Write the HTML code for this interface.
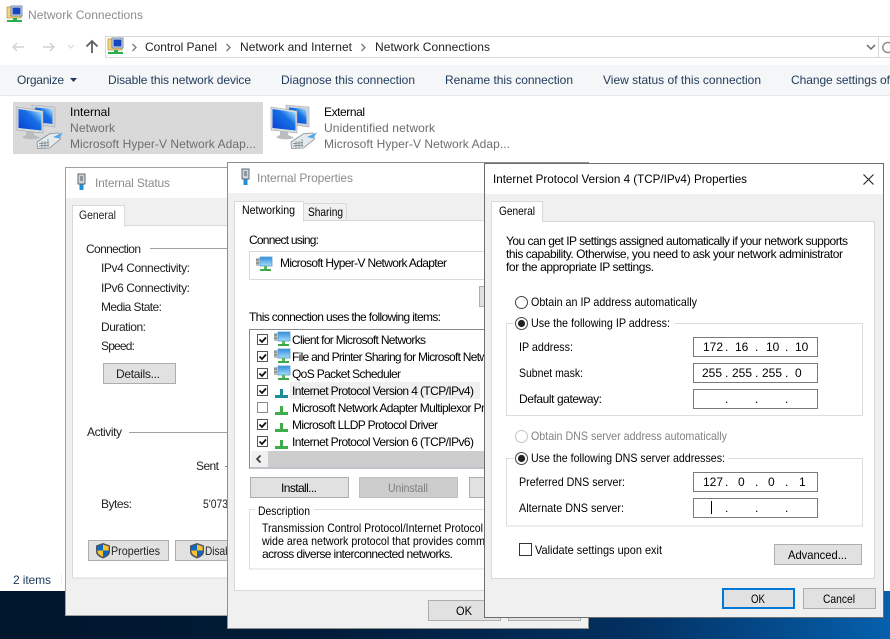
<!DOCTYPE html>
<html><head><meta charset="utf-8"><title>Network Connections</title>
<style>
html,body{margin:0;padding:0;background:#fff;overflow:hidden}
svg{display:block}
text{font:12px "Liberation Sans",sans-serif;fill:#000;white-space:pre}
.g{fill:#777}.l{fill:#8c8c8c}.b{fill:#1e395b}.d{fill:#6d6d6d}.n{fill:#222}
.btn{fill:#e1e1e1;stroke:#adadad}
.grp{fill:none;stroke:#dcdcdc}
.fld{fill:#fff;stroke:#7a7a7a}
.chk{fill:#fff;stroke:#555}
</style></head><body>
<svg xmlns="http://www.w3.org/2000/svg" width="890" height="639" viewBox="0 0 890 639">
<defs>
<linearGradient id="desk" x1="0" x2="1" y1="0" y2="0"><stop offset="0" stop-color="#00162c"/><stop offset=".35" stop-color="#001b38"/><stop offset=".7" stop-color="#022f5f"/><stop offset="1" stop-color="#0560ad"/></linearGradient>
<linearGradient id="scr" x1="0" x2="1" y1="1" y2="0"><stop offset="0" stop-color="#0a3ed2"/><stop offset=".6" stop-color="#1770e6"/><stop offset=".85" stop-color="#7cc0f4"/><stop offset="1" stop-color="#e6f6fe"/></linearGradient>
<linearGradient id="sm" x1="0" x2="0" y1="0" y2="1"><stop offset="0" stop-color="#2f8ee0"/><stop offset="1" stop-color="#a5dcf8"/></linearGradient>
<g id="big">
<path d="M32 105l23 2v20l-23-3z" fill="#cfd3d6" stroke="#a5aaae" stroke-width=".6"/>
<path d="M35 107.500l17.500 1.500v15l-17.500-2z" fill="url(#scr)"/>
<path d="M17 107l26 4v22l-26-3z" fill="#dcdfe1" stroke="#9a9fa4" stroke-width=".6"/>
<path d="M18.500 109l23 3.500v18l-23-2.500z" fill="url(#scr)"/>
<path d="M26 131l8 1v3l6 2.500c-3 2.500-15 2.500-18-.5l4-2z" fill="#b9bdc0"/>
<path d="M37 142l13-8.500 9-.5 1.500 6-11 9-12 .5z" fill="#e4e9ec" stroke="#858e94" stroke-width=".8"/>
<path d="M39 143.500l10-.8M39 146l10-.8M42 141v7M45 141v7M48 139v8" stroke="#6b7980" stroke-width=".7" fill="none"/>
<path d="M53 137l10-4.500-4 6z" fill="#4fa8e8"/>
</g>
<g id="mon">
<rect x="3" y="0" width="12" height="9" fill="url(#sm)" stroke="#5a9bc9" stroke-width=".8"/>
<rect x="7" y="9" width="3" height="3" fill="#5cb85c"/>
<rect x="3" y="12" width="11" height="2" fill="#3fa94a"/>
<rect x="-1" y="1" width="4" height="8" fill="#b8bdc2"/>
<path d="M-1 3h3M-1 6h3" stroke="#555" stroke-width=".8"/>
</g>
<g id="pr"><path d="M5 0h3v6h-3z"/><rect x="0" y="6" width="13" height="3"/></g>
<g id="plug"><rect x="1" y="0" width="7" height="10" fill="#cfd5d9" stroke="#5c6a73"/><rect x="3" y="2" width="3" height="5" fill="#8b98a1"/><rect x="2.500" y="10.500" width="4" height="5.500" fill="#1f8fd8"/></g>
<g id="shield"><path d="M7 0l7 2.500v6c0 3.500-3 5.500-7 7-4-1.500-7-3.500-7-7v-6z" fill="#4a5560"/><path d="M7 1.500v6h-5.700v-4z" fill="#0a67c4"/><path d="M7 1.500l5.700 2v4h-5.700z" fill="#f9c32c"/><path d="M1.300 7.500h5.700v6.300c-3-1.200-5.700-3-5.700-6.300z" fill="#f9c32c"/><path d="M7 7.500h5.700c0 3.300-2.700 5.100-5.700 6.300z" fill="#0a67c4"/></g>
<g id="fold"><rect x="0" y="1" width="14" height="11" fill="#f2d57a" stroke="#b99a45" stroke-width=".8"/><rect x="4" y="0" width="11" height="10" fill="#dfe6ee" stroke="#5d6b8a" stroke-width=".8"/><rect x="5.500" y="1.500" width="8" height="7" fill="#1546c0"/><rect x="6" y="12" width="4" height="3" fill="#26b14c"/><rect x="0" y="14" width="15" height="2" fill="#26b14c"/></g>
<path id="chev" d="M0 0l3.500 3.500-3.500 3.500" fill="none" stroke="#777" stroke-width="1.300"/>
</defs>

<!-- Desktop -->
<rect x="0" y="591" width="890" height="48" fill="url(#desk)"/>

<!-- Explorer -->
<rect width="890" height="591" fill="#fff"/>
<use href="#fold" x="7" y="6"/>
<text class="l" x="28" y="19" textLength="115">Network Connections</text>
<path d="M24 47h-11M17 43l-4 4 4 4" fill="none" stroke="#d2d2d2" stroke-width="1.500"/>
<path d="M43 47h11M50 43l4 4-4 4" fill="none" stroke="#d2d2d2" stroke-width="1.500"/>
<path d="M68 45l3 3 3-3" fill="none" stroke="#d9d9d9" stroke-width="1.200"/>
<path d="M92 53v-12M86.500 46.500l5.500-5.500 5.500 5.500" fill="none" stroke="#5f5f5f" stroke-width="1.800"/>
<rect x="105.500" y="36.500" width="800" height="21" fill="#fff" stroke="#d9d9d9"/>
<use href="#fold" x="108" y="38"/>
<use href="#chev" x="132.500" y="44"/>
<text class="n" x="145" y="51" textLength="72">Control Panel</text>
<use href="#chev" x="226.500" y="44"/>
<text class="n" x="240" y="51" textLength="112">Network and Internet</text>
<use href="#chev" x="361.500" y="44"/>
<text class="n" x="375" y="51" textLength="115">Network Connections</text>
<path d="M867 45l4 4 4-4" fill="none" stroke="#666" stroke-width="1.500"/>
<rect x="878" y="37" width="1" height="20" fill="#d9d9d9"/>
<path d="M890 43a5 5 0 1 0 0 9" fill="none" stroke="#8a8a8a" stroke-width="1.500"/>
<rect x="0" y="65" width="890" height="30" fill="#f5f6f7"/>
<rect x="0" y="95" width="890" height="1" fill="#e8e9ea"/>
<text class="b" x="17" y="84" textLength="47">Organize</text>
<path d="M70 78h7l-3.500 4z" fill="#1e395b"/>
<text class="b" x="108" y="84" textLength="143">Disable this network device</text>
<text class="b" x="281" y="84" textLength="134">Diagnose this connection</text>
<text class="b" x="445" y="84" textLength="128">Rename this connection</text>
<text class="b" x="603" y="84" textLength="158">View status of this connection</text>
<text class="b" x="791" y="84" textLength="99">Change settings of</text>
<rect x="13" y="102" width="250" height="52" fill="#d9d9d9"/>
<use href="#big"/>
<text x="70" y="116" textLength="40">Internal</text>
<text class="d" x="70" y="132" textLength="45">Network</text>
<text class="d" x="70" y="148" textLength="186">Microsoft Hyper-V Network Adap...</text>
<use href="#big" x="254"/>
<text x="324" y="116" textLength="41">External</text>
<text class="d" x="324" y="132" textLength="111">Unidentified network</text>
<text class="d" x="324" y="148" textLength="186">Microsoft Hyper-V Network Adap...</text>
<text class="b" x="13" y="584" textLength="38">2 items</text>
<rect x="61" y="574" width="1" height="12" fill="#eee"/>

<!-- Status dialog -->
<rect x="65.500" y="167.500" width="170" height="448" fill="#f0f0f0" stroke="#a0a0a0"/>
<rect x="66" y="168" width="170" height="30" fill="#fff"/>
<use href="#plug" x="77" y="174"/>
<text class="l" x="95" y="187" textLength="75">Internal Status</text>
<rect x="72.500" y="225.500" width="170" height="352.500" fill="#fff" stroke="#d9d9d9"/>
<rect x="72.500" y="205.500" width="52" height="21" fill="#fff" stroke="#d9d9d9"/>
<rect x="73" y="224" width="51" height="3" fill="#fff"/>
<text x="79" y="219" textLength="37" lengthAdjust="spacingAndGlyphs" class="n">General</text>
<text class="n" x="86" y="253" textLength="55">Connection</text>
<rect x="150" y="248" width="80" height="1" fill="#a0a0a0"/>
<text class="n" x="101" y="272" textLength="89">IPv4 Connectivity:</text>
<text class="n" x="101" y="292" textLength="89">IPv6 Connectivity:</text>
<text class="n" x="101" y="311" textLength="61">Media State:</text>
<text class="n" x="101" y="331" textLength="45">Duration:</text>
<text class="n" x="101" y="350" textLength="34">Speed:</text>
<rect class="btn" x="103.500" y="363.500" width="72" height="20"/>
<text class="n" x="116" y="378" textLength="44">Details...</text>
<text class="n" x="87" y="436" textLength="35">Activity</text>
<rect x="129" y="432" width="100" height="1" fill="#a0a0a0"/>
<text class="n" x="196" y="470" textLength="23">Sent</text>
<rect x="225" y="466" width="4" height="1" fill="#888"/>
<text class="n" x="101" y="508" textLength="31">Bytes:</text>
<text class="n" x="203" y="508" textLength="25" lengthAdjust="spacingAndGlyphs">5'073</text>
<rect class="btn" x="88.500" y="540.500" width="80" height="20"/>
<use href="#shield" x="96" y="543"/>
<text class="n" x="111" y="555" textLength="49" lengthAdjust="spacingAndGlyphs">Properties</text>
<rect class="btn" x="175.500" y="540.500" width="70" height="20"/>
<use href="#shield" x="190" y="543"/>
<text class="n" x="205" y="555" textLength="28" lengthAdjust="spacingAndGlyphs">Disabl</text>

<!-- Properties dialog -->
<rect x="227.500" y="162.500" width="361" height="466" fill="#f0f0f0" stroke="#8f8f8f"/>
<rect x="228" y="163" width="360" height="30" fill="#fff"/>
<use href="#plug" x="241" y="169"/>
<text class="l" x="257" y="182" textLength="96">Internal Properties</text>
<rect x="234.500" y="220.500" width="300" height="370" fill="#fff" stroke="#d9d9d9"/>
<rect x="303.500" y="203.500" width="43" height="17" fill="#f0f0f0" stroke="#d9d9d9"/>
<rect x="234.500" y="201.500" width="69" height="20" fill="#fff" stroke="#d9d9d9"/>
<rect x="235" y="219" width="68" height="3" fill="#fff"/>
<text x="242" y="214" textLength="53" lengthAdjust="spacingAndGlyphs">Networking</text>
<text x="308" y="216" textLength="35" lengthAdjust="spacingAndGlyphs">Sharing</text>
<text x="249" y="244" textLength="70">Connect using:</text>
<rect x="249.500" y="251.500" width="260" height="28" fill="#fff" stroke="#d9d9d9"/>
<use href="#mon" x="257" y="257"/>
<text x="280" y="267" textLength="167">Microsoft Hyper-V Network Adapter</text>
<rect class="btn" x="479.500" y="286.500" width="40" height="20"/>
<text x="249" y="321" textLength="192">This connection uses the following items:</text>
<rect x="249.500" y="329.500" width="250" height="138.500" fill="#fff" stroke="#828790"/>
<rect x="290" y="382" width="190" height="17" fill="#f0f0f0"/>
<rect class="chk" x="257.500" y="334.500" width="10" height="10"/><path d="M259.500 339.500l2.500 2.500 4-4.500" fill="none" stroke="#111" stroke-width="1.800"/>
<rect class="chk" x="257.500" y="351.500" width="10" height="10"/><path d="M259.500 356.500l2.500 2.500 4-4.500" fill="none" stroke="#111" stroke-width="1.800"/>
<rect class="chk" x="257.500" y="368.500" width="10" height="10"/><path d="M259.500 373.500l2.500 2.500 4-4.500" fill="none" stroke="#111" stroke-width="1.800"/>
<rect class="chk" x="257.500" y="385.500" width="10" height="10"/><path d="M259.500 390.500l2.500 2.500 4-4.500" fill="none" stroke="#111" stroke-width="1.800"/>
<rect class="chk" x="257.500" y="402.500" width="10" height="10" style="stroke:#8a8a8a"/>
<rect class="chk" x="257.500" y="419.500" width="10" height="10"/><path d="M259.500 424.500l2.500 2.500 4-4.500" fill="none" stroke="#111" stroke-width="1.800"/>
<rect class="chk" x="257.500" y="436.500" width="10" height="10"/><path d="M259.500 441.500l2.500 2.500 4-4.500" fill="none" stroke="#111" stroke-width="1.800"/>
<use href="#mon" x="275" y="332"/>
<use href="#mon" x="275" y="349"/>
<use href="#mon" x="275" y="366"/>
<use href="#pr" x="275" y="389" fill="#1e8c96"/>
<use href="#pr" x="275" y="406" fill="#3fae4a"/>
<use href="#pr" x="275" y="423" fill="#3fae4a"/>
<use href="#pr" x="275" y="440" fill="#3fae4a"/>
<text x="292" y="344" textLength="134">Client for Microsoft Networks</text>
<text x="292" y="361" textLength="196">File and Printer Sharing for Microsoft Netw</text>
<text x="292" y="378" textLength="109">QoS Packet Scheduler</text>
<text x="292" y="395" textLength="182">Internet Protocol Version 4 (TCP/IPv4)</text>
<text x="292" y="412" textLength="193">Microsoft Network Adapter Multiplexor Pr</text>
<text x="292" y="429" textLength="146">Microsoft LLDP Protocol Driver</text>
<text x="292" y="446" textLength="182">Internet Protocol Version 6 (TCP/IPv6)</text>
<rect x="251" y="451" width="240" height="16" fill="#f0f0f0"/>
<rect x="268" y="451" width="225" height="16" fill="#cdcdcd"/>
<path d="M260.500 455.500l-3.500 3.500 3.500 3.500" fill="none" stroke="#333" stroke-width="1.600"/>
<rect class="btn" x="250.500" y="477.500" width="98" height="20"/>
<text x="281" y="492" textLength="36">Install...</text>
<rect x="359.500" y="477.500" width="98" height="20" fill="#ccc" stroke="#bfbfbf"/>
<text x="388" y="492" textLength="40" lengthAdjust="spacingAndGlyphs" style="fill:#7c7c7c">Uninstall</text>
<rect class="btn" x="469.500" y="477.500" width="40" height="20"/>
<rect class="grp" x="249.500" y="509.500" width="260" height="59.500"/>
<rect x="255" y="505" width="59" height="10" fill="#fff"/>
<text x="258" y="515" textLength="52" lengthAdjust="spacingAndGlyphs">Description</text>
<text x="262" y="532" textLength="221" lengthAdjust="spacingAndGlyphs">Transmission Control Protocol/Internet Protocol</text>
<text x="262" y="545" textLength="223" lengthAdjust="spacingAndGlyphs">wide area network protocol that provides comm</text>
<text x="262" y="558" textLength="191">across diverse interconnected networks.</text>
<rect class="btn" x="428.500" y="600.500" width="72" height="20"/>
<text x="456" y="615" textLength="16" lengthAdjust="spacingAndGlyphs">OK</text>
<rect class="btn" x="508.500" y="600.500" width="72" height="20"/>

<!-- IP dialog -->
<rect x="484.500" y="163.500" width="399" height="454" fill="#f0f0f0" stroke="#6d6d6d"/>
<rect x="485" y="164" width="398" height="30" fill="#fff"/>
<text x="493" y="183" textLength="254" lengthAdjust="spacingAndGlyphs">Internet Protocol Version 4 (TCP/IPv4) Properties</text>
<path d="M863.500 174.500l10 10M873.500 174.500l-10 10" stroke="#222" stroke-width="1.100"/>
<rect x="491.500" y="221.500" width="383" height="357" fill="#fff" stroke="#d9d9d9"/>
<rect x="491.500" y="201.500" width="51" height="20" fill="#fff" stroke="#d9d9d9"/>
<rect x="492" y="220" width="50" height="3" fill="#fff"/>
<text x="499" y="215" textLength="36" lengthAdjust="spacingAndGlyphs">General</text>
<text x="506" y="245" textLength="342">You can get IP settings assigned automatically if your network supports</text>
<text x="506" y="258" textLength="337">this capability. Otherwise, you need to ask your network administrator</text>
<text x="506" y="271" textLength="148">for the appropriate IP settings.</text>
<circle cx="521.500" cy="302.500" r="6" fill="#fff" stroke="#444"/>
<text x="531" y="306" textLength="166" lengthAdjust="spacingAndGlyphs">Obtain an IP address automatically</text>
<rect class="grp" x="506.500" y="323.500" width="356" height="92"/>
<rect x="514" y="318" width="160" height="11" fill="#fff"/>
<circle cx="521.500" cy="323.500" r="6" fill="#fff" stroke="#444"/>
<circle cx="521.500" cy="323.500" r="3.600" fill="#222"/>
<text x="531" y="327" textLength="139" lengthAdjust="spacingAndGlyphs">Use the following IP address:</text>
<text x="519" y="351" textLength="54" lengthAdjust="spacingAndGlyphs">IP address:</text>
<text x="519" y="377" textLength="64" lengthAdjust="spacingAndGlyphs">Subnet mask:</text>
<text x="519" y="403" textLength="83">Default gateway:</text>
<rect class="fld" x="693.500" y="337.500" width="124" height="19"/>
<rect class="fld" x="693.500" y="363.500" width="124" height="19"/>
<rect class="fld" x="693.500" y="389.500" width="124" height="19"/>
<text x="703" y="351">172</text><text x="725" y="351">.</text><text x="735" y="351">16</text><text x="755" y="351">.</text><text x="766" y="351">10</text><text x="785" y="351">.</text><text x="795" y="351">10</text>
<text x="702" y="377">255</text><text x="725" y="377">.</text><text x="732" y="377">255</text><text x="755" y="377">.</text><text x="762" y="377">255</text><text x="785" y="377">.</text><text x="795" y="377">0</text>
<text x="725" y="403">.</text><text x="755" y="403">.</text><text x="785" y="403">.</text>
<circle cx="521.500" cy="436.500" r="6" fill="#fff" stroke="#c4c4c4"/>
<text x="531" y="440" textLength="196" lengthAdjust="spacingAndGlyphs" style="fill:#838383">Obtain DNS server address automatically</text>
<rect class="grp" x="506.500" y="458.500" width="356" height="67.500"/>
<rect x="514" y="453" width="214" height="11" fill="#fff"/>
<circle cx="521.500" cy="458.500" r="6" fill="#fff" stroke="#444"/>
<circle cx="521.500" cy="458.500" r="3.600" fill="#222"/>
<text x="531" y="462" textLength="194" lengthAdjust="spacingAndGlyphs">Use the following DNS server addresses:</text>
<text x="519" y="486" textLength="106" lengthAdjust="spacingAndGlyphs">Preferred DNS server:</text>
<text x="519" y="512" textLength="105" lengthAdjust="spacingAndGlyphs">Alternate DNS server:</text>
<rect class="fld" x="693.500" y="472.500" width="124" height="19"/>
<rect class="fld" x="693.500" y="498.500" width="124" height="19"/>
<text x="703" y="486">127</text><text x="725" y="486">.</text><text x="738" y="486">0</text><text x="755" y="486">.</text><text x="768" y="486">0</text><text x="785" y="486">.</text><text x="799" y="486">1</text>
<rect x="711" y="501" width="1" height="13" fill="#000"/>
<text x="725" y="512">.</text><text x="755" y="512">.</text><text x="785" y="512">.</text>
<rect x="519.500" y="543.500" width="12" height="12" fill="#fff" stroke="#333"/>
<text x="535" y="554" textLength="127" lengthAdjust="spacingAndGlyphs">Validate settings upon exit</text>
<rect class="btn" x="774.500" y="544.500" width="87" height="20"/>
<text x="788" y="559" textLength="59" lengthAdjust="spacingAndGlyphs">Advanced...</text>
<rect x="723" y="589" width="71" height="19" fill="#e1e1e1" stroke="#0078d7" stroke-width="2"/>
<text x="751" y="603" textLength="14" lengthAdjust="spacingAndGlyphs">OK</text>
<rect class="btn" x="803.500" y="588.500" width="72" height="20"/>
<text x="823" y="603" textLength="32" lengthAdjust="spacingAndGlyphs">Cancel</text>
</svg>
</body></html>
